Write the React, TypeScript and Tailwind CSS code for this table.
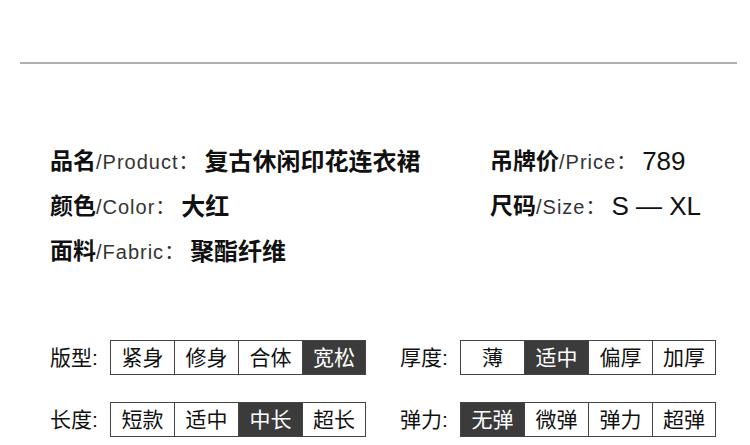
import React from "react";

const cjk = "font-['Liberation_Sans','Noto_Sans_CJK_SC',sans-serif]";

interface InfoRow {
  cn: string;
  en: string;
  value: string;
  latinValue?: boolean;
}

const leftRows: InfoRow[] = [
  { cn: "品名", en: "/Product", value: "复古休闲印花连衣裙" },
  { cn: "颜色", en: "/Color", value: "大红" },
  { cn: "面料", en: "/Fabric", value: "聚酯纤维" },
];

const rightRows: InfoRow[] = [
  { cn: "吊牌价", en: "/Price", value: "789", latinValue: true },
  { cn: "尺码", en: "/Size", value: "S — XL", latinValue: true },
];

interface OptionGroup {
  label: string;
  options: string[];
  active: number;
}

const leftGroups: OptionGroup[] = [
  { label: "版型:", options: ["紧身", "修身", "合体", "宽松"], active: 3 },
  { label: "长度:", options: ["短款", "适中", "中长", "超长"], active: 2 },
];

const rightGroups: OptionGroup[] = [
  { label: "厚度:", options: ["薄", "适中", "偏厚", "加厚"], active: 1 },
  { label: "弹力:", options: ["无弹", "微弹", "弹力", "超弹"], active: 0 },
];

const Info = ({ row }: { row: InfoRow }) => (
  <div className="flex items-center h-[45px] whitespace-nowrap">
    <span className="text-[23px] font-bold text-[#111]">{row.cn}</span>
    <span className="text-[20px] text-[#333] tracking-[1px]">{row.en}</span>
    <span className="text-[20px] text-[#333] w-[26px]">：</span>
    {row.latinValue ? (
      <span className="text-[26px] text-[#111]">{row.value}</span>
    ) : (
      <span className="text-[24px] font-bold text-[#111]">{row.value}</span>
    )}
  </div>
);

const Options = ({ group }: { group: OptionGroup }) => (
  <div className="flex items-center">
    <div className="w-[60px] text-[21px] text-[#111]">{group.label}</div>
    <div className="flex">
      {group.options.map((opt, i) => (
        <div
          key={opt + i}
          className={
            "w-[64px] h-[35px] flex items-center justify-center text-[21px] border-y border-l border-[#444] " +
            (i === group.options.length - 1 ? "border-r " : "") +
            (i === group.active ? "bg-[#3b3b3b] text-white border-[#222]" : "bg-white text-[#111]")
          }
        >
          {opt}
        </div>
      ))}
    </div>
  </div>
);

export default function App() {
  return (
    <div className={`w-[750px] h-[445px] bg-white overflow-hidden ${cjk}`}>
      <div className="pt-[62px] pl-[20px]">
        <div className="w-[717px] h-[2px] bg-[#b0b0b0]" />
      </div>

      <div className="flex pt-[75px] pl-[50px]">
        <div className="w-[440px]">
          {leftRows.map((r) => (
            <Info key={r.cn} row={r} />
          ))}
        </div>
        <div>
          {rightRows.map((r) => (
            <Info key={r.cn} row={r} />
          ))}
        </div>
      </div>

      <div className="flex pt-[66px] pl-[50px]">
        <div className="w-[350px] flex flex-col gap-[27px]">
          {leftGroups.map((g) => (
            <Options key={g.label} group={g} />
          ))}
        </div>
        <div className="flex flex-col gap-[27px]">
          {rightGroups.map((g) => (
            <Options key={g.label} group={g} />
          ))}
        </div>
      </div>
    </div>
  );
}
